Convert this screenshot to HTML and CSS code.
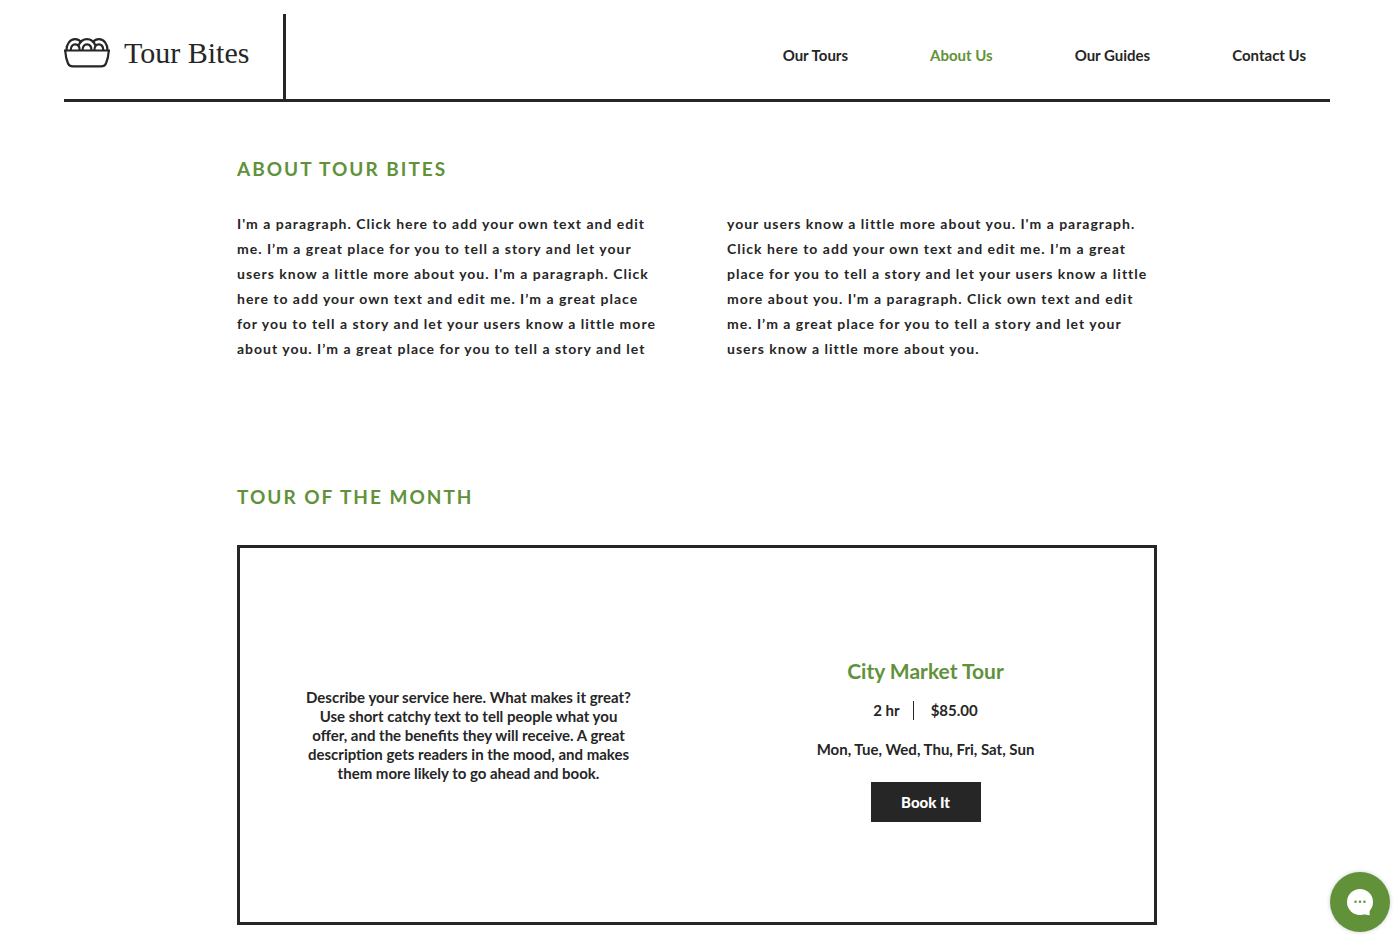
FILE: index.html
```html
<!DOCTYPE html>
<html lang="en">
<head>
<meta charset="utf-8">
<meta name="viewport" content="width=device-width, initial-scale=1">
<title>About Us | Tour Bites</title>
<link rel="stylesheet" href="styles.css">
</head>
<body>
<header class="header">
  <a class="brand" href="#">
    <svg class="brand-icon" viewBox="0 0 46 30" fill="none" stroke="currentColor" stroke-width="2.200" aria-hidden="true">
      <path d="M0 12.500H46"/>
      <path d="M1.200 12.500C1.500 17.500 2.500 22 4 25.500C5 27.700 6.500 28.400 9 28.400H37C39.500 28.400 41 27.700 42 25.500C43.500 22 44.500 17.500 44.800 12.500"/>
      <path d="M2.500 12C2.500 6 6 1.200 11 1.200C14 1.200 16 2.500 17.200 4.500M28.800 4.500C30 2.500 32 1.200 35 1.200C40 1.200 43.500 6 43.500 12"/>
      <path d="M14.500 7.500C16 4 19 1.200 23 1.200C27 1.200 30 4 31.500 7.500"/>
      <path d="M6.800 12C6.800 8.500 8.500 6.300 11.200 6.300C14 6.300 15.600 8.500 15.600 12M18.600 12C18.600 8.500 20.200 6.300 23 6.300C25.800 6.300 27.400 8.500 27.400 12M30.400 12C30.400 8.500 32 6.300 34.800 6.300C37.500 6.300 39.200 8.500 39.200 12"/>
    </svg>
    <span class="brand-name">Tour Bites</span>
  </a>
  <nav class="nav" aria-label="Main">
    <a href="#">Our Tours</a>
    <a class="active" href="#" aria-current="page">About Us</a>
    <a href="#">Our Guides</a>
    <a href="#">Contact Us</a>
  </nav>
</header>
<main class="main">
  <section class="about">
    <h1 class="title">ABOUT TOUR BITES</h1>
    <p class="about-text">I'm a paragraph. Click here to add your own text and edit<br>
    me. I’m a great place for you to tell a story and let your<br>
    users know a little more about you. I'm a paragraph. Click<br>
    here to add your own text and edit me. I’m a great place<br>
    for you to tell a story and let your users know a little more<br>
    about you. I’m a great place for you to tell a story and let<br>
    your users know a little more about you. I'm a paragraph.<br>
    Click here to add your own text and edit me. I’m a great<br>
    place for you to tell a story and let your users know a little<br>
    more about you. I'm a paragraph. Click own text and edit<br>
    me. I’m a great place for you to tell a story and let your<br>
    users know a little more about you.</p>
  </section>
  <section class="month">
    <h2 class="title">TOUR OF THE MONTH</h2>
    <article class="card">
      <p class="card-text">Describe your service here. What makes it great?<br>
      Use short catchy text to tell people what you<br>
      offer, and the benefits they will receive. A great<br>
      description gets readers in the mood, and makes<br>
      them more likely to go ahead and book.</p>
      <div class="tour">
        <h3 class="tour-name">City Market Tour</h3>
        <p class="tour-facts"><span>2 hr</span><span class="price">$85.00</span></p>
        <p class="tour-days">Mon, Tue, Wed, Thu, Fri, Sat, Sun</p>
        <button class="book" type="button">Book It</button>
      </div>
    </article>
  </section>
</main>
<button class="chat" type="button" aria-label="Open chat">
  <svg class="chat-icon" viewBox="0 0 26 26" aria-hidden="true">
    <circle cx="13" cy="13" r="13" fill="#fff"/>
    <path fill="#fff" d="M15 25L22.600 26.300V19Z"/>
    <circle cx="8.500" cy="12.700" r="1.200"/><circle cx="13" cy="12.700" r="1.200"/><circle cx="17.500" cy="12.700" r="1.200"/>
  </svg>
</button>
</body>
</html>
```
FILE: styles.css
```css
* { box-sizing: border-box; }

:root {
  --ink: #262626;
  --green: #61923a;
}

body {
  margin: 0;
  padding: 14px 5px 21px 0;
  background: #fff;
  color: var(--ink);
  font: 700 15px/19px Lato, "Open Sans", sans-serif;
}

h1, h2, h3, p { margin: 0; }
a { color: inherit; text-decoration: none; }
button { border: 0; font: inherit; cursor: pointer; }

.header {
  display: flex;
  justify-content: space-between;
  min-height: 88px;
  margin: 0 64px;
  border-bottom: 3px solid var(--ink);
}

.brand {
  display: flex;
  align-items: center;
  gap: 14px;
  width: 222px;
  padding-bottom: 8px;
  border-right: 3px solid var(--ink);
}

.brand-icon { width: 46px; height: 30px; }

.brand-name {
  font: 400 30px/36px "Liberation Serif", serif;
  white-space: nowrap;
}

.nav {
  display: flex;
  align-items: center;
  gap: 82px;
  padding: 0 24px 3px 0;
}

.nav .active { color: var(--green); }

.main {
  max-width: 920px;
  margin: 0 auto;
  padding-top: 54px;
}

.title {
  color: var(--green);
  font-size: 19px;
  line-height: 25px;
  letter-spacing: 2px;
}

.about-text {
  margin-top: 30px;
  columns: 2;
  column-gap: 60px;
  font-size: 14px;
  line-height: 25px;
  letter-spacing: 1px;
  white-space: nowrap;
}

.month { margin-top: 123px; }

.card {
  display: grid;
  grid-template-columns: 1fr 1fr;
  align-items: center;
  min-height: 380px;
  margin-top: 36px;
  border: 3px solid var(--ink);
  text-align: center;
}

.tour { padding-top: 8px; }

.tour-name {
  color: var(--green);
  font-size: 21px;
  line-height: 30px;
}

.tour-facts {
  display: flex;
  justify-content: center;
  margin-top: 15px;
}

.price {
  margin-left: 13px;
  padding-left: 17px;
  border-left: 1px solid var(--ink);
}

.tour-days { margin-top: 20px; }

.book {
  width: 110px;
  height: 40px;
  margin-top: 23px;
  background: var(--ink);
  color: #fff;
  font-weight: 900;
}

.chat {
  position: fixed;
  right: 9px;
  bottom: 14px;
  display: grid;
  place-items: center;
  width: 60px;
  height: 60px;
  padding: 0;
  border-radius: 50%;
  background: var(--green);
  box-shadow: 0 0 4px rgba(0, 0, 0, 0.2);
}

.chat-icon { width: 26px; height: 26px; overflow: visible; fill: var(--green); }
```
